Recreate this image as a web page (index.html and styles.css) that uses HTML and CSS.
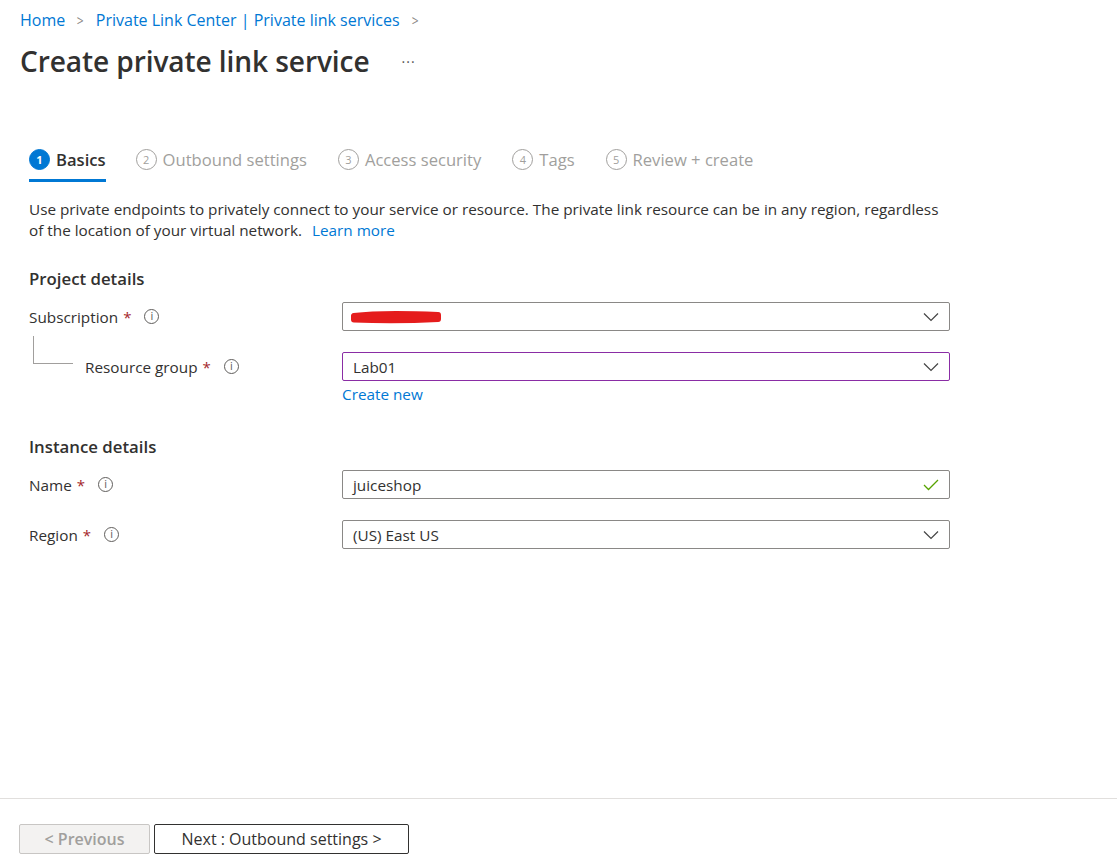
FILE: index.html
```html
<!DOCTYPE html>
<html>
<head>
<meta charset="utf-8">
<link rel="stylesheet" href="styles.css">
</head>
<body>
<div class="page">
  <nav class="crumbs">
    <a>Home</a><span class="sep">&gt;</span><a>Private Link Center | Private link services</a><span class="sep">&gt;</span>
  </nav>
  <div class="title-row">
    <h1>Create private link service</h1>
    <span class="more">···</span>
  </div>

  <div class="content">
    <div class="tabs">
      <div class="tab active"><span class="num">1</span>Basics</div>
      <div class="tab"><span class="num">2</span>Outbound settings</div>
      <div class="tab"><span class="num">3</span>Access security</div>
      <div class="tab"><span class="num">4</span>Tags</div>
      <div class="tab"><span class="num">5</span>Review + create</div>
    </div>

    <p class="desc">Use private endpoints to privately connect to your service or resource. The private link resource can be in any region, regardless<br>of the location of your virtual network. <a>Learn more</a></p>

    <h2 class="section">Project details</h2>
    <div class="row">
      <div class="label">Subscription <span class="req">*</span><span class="info">i</span></div>
      <div class="field">
        <div class="input">
          <svg class="scribble" width="94" height="14" viewBox="0 0 94 14"><path d="M5 6 C25 3.5 55 3.5 89 5 L89 9 C60 10.5 30 10.5 5 9.5 Z" fill="#e51c1c" stroke="#e51c1c" stroke-width="6" stroke-linejoin="round"/></svg>
          <svg class="chev" width="16" height="10" viewBox="0 0 16 10"><path d="M1 1.5 L8 8.5 L15 1.5" fill="none" stroke="#444" stroke-width="1.2"/></svg>
        </div>
      </div>
    </div>
    <div class="row sub">
      <div class="label child"><span class="tree"></span>Resource group <span class="req">*</span><span class="info">i</span></div>
      <div class="field">
        <div class="input focus"><span class="val">Lab01</span>
          <svg class="chev" width="16" height="10" viewBox="0 0 16 10"><path d="M1 1.5 L8 8.5 L15 1.5" fill="none" stroke="#444" stroke-width="1.2"/></svg>
        </div>
        <a class="create">Create new</a>
      </div>
    </div>

    <h2 class="section inst">Instance details</h2>
    <div class="row">
      <div class="label">Name <span class="req">*</span><span class="info">i</span></div>
      <div class="field">
        <div class="input"><span class="val">juiceshop</span>
          <svg class="chev" width="16" height="12" viewBox="0 0 16 12"><path d="M1 6 L5.5 10.5 L15 1" fill="none" stroke="#57a300" stroke-width="1.3"/></svg>
        </div>
      </div>
    </div>
    <div class="row">
      <div class="label">Region <span class="req">*</span><span class="info">i</span></div>
      <div class="field">
        <div class="input"><span class="val">(US) East US</span>
          <svg class="chev" width="16" height="10" viewBox="0 0 16 10"><path d="M1 1.5 L8 8.5 L15 1.5" fill="none" stroke="#444" stroke-width="1.2"/></svg>
        </div>
      </div>
    </div>
  </div>
</div>
<footer class="footer">
  <button class="btn prev">&lt; Previous</button>
  <button class="btn next">Next : Outbound settings &gt;</button>
</footer>
</body>
</html>
```
FILE: styles.css
```css
* { box-sizing: border-box; }
html, body { margin: 0; padding: 0; background: #fff; }
body {
  font-family: "Open Sans", "Noto Sans", sans-serif;
  color: #323130;
  width: 1117px;
  height: 865px;
  position: relative;
  overflow: hidden;
}
a { color: #0078d4; cursor: pointer; }
.page { padding: 8px 0 0 20px; height: 798px; }
.crumbs { font-size: 16px; height: 24px; display: flex; align-items: center; color: #0078d4; }
.crumbs .sep { color: #8a8886; margin: 0 11px; font-size: 15px; transform: scaleX(0.8); display: inline-block; }
.title-row { display: flex; align-items: center; margin-top: 11px; height: 36px; }
h1 { margin: 0; font-size: 28.1px; font-weight: 600; color: #323130; letter-spacing: -0.1px; }
.more { margin-left: 32px; font-size: 14px; color: #555; letter-spacing: 1px; }
.content { padding-left: 9px; margin-top: 67px; }
.tabs { display: flex; height: 53px; align-items: flex-start; }
.tab { display: flex; align-items: center; font-size: 16.6px; color: #a19f9d; height: 26px; margin-right: 31px; position: relative; }
.tab .num { width: 21px; height: 21px; border: 1px solid #a19f9d; border-radius: 50%; font-size: 11px; display: flex; align-items: center; justify-content: center; margin-right: 6px; }
.tab.active { color: #323130; font-weight: 600; margin-right: 30px; }
.tab.active .num { background: #0078d4; border-color: #0078d4; color: #fff; font-weight: 700; }
.tab.active::after { content: ""; position: absolute; left: 0; right: 0; bottom: -10px; height: 3px; background: #0078d4; }
.desc { font-size: 15.3px; line-height: 21px; margin: 0; color: #323130; }
.desc a { margin-left: 6px; }
.section { font-size: 16.8px; font-weight: 600; margin: 27px 0 12px; height: 22px; line-height: 22px; }
.section.inst { margin-top: 32px; }
.row { display: flex; align-items: flex-start; margin-bottom: 21px; }
.row.sub { margin-bottom: 31px; }
.label { width: 313px; font-size: 15.3px; height: 29px; display: flex; align-items: center; position: relative; }
.label.child { padding-left: 56px; }
.tree { position: absolute; left: 4px; top: -16px; width: 40px; height: 28px; border-left: 1px solid #a19f9d; border-bottom: 1px solid #a19f9d; }
.req { color: #a4262c; margin-left: 5px; font-size: 15px; }
.info { width: 15px; height: 15px; border: 1px solid #605e5c; border-radius: 50%; font-size: 10px; display: inline-flex; align-items: center; justify-content: center; margin-left: 13px; color: #605e5c; font-family: "DejaVu Sans", sans-serif; }
.field { width: 608px; }
.input { height: 29px; border: 1px solid #8a8886; border-radius: 2px; display: flex; align-items: center; padding: 0 10px; position: relative; font-size: 15.3px; }
.input.focus { border-color: #8a2da5; }
.input .val { flex: 1; }
.input .chev { margin-left: auto; }
.scribble { position: absolute; left: 6px; top: 7px; }
.create { display: block; font-size: 15.3px; margin-top: 3px; line-height: 20px; }
.footer { position: absolute; left: 0; right: 0; top: 798px; bottom: 0; border-top: 1px solid #e1dfdd; padding: 25px 0 0 19px; display: flex; gap: 4px; align-items: flex-start; }
.btn { height: 30px; font-family: inherit; font-size: 16px; border-radius: 2px; padding: 0; }
.btn.prev { width: 131px; background: #f3f2f1; border: 1px solid #c8c6c4; color: #a19f9d; font-weight: 600; }
.btn.next { width: 255px; background: #fff; border: 1px solid #323130; color: #323130; }
```
